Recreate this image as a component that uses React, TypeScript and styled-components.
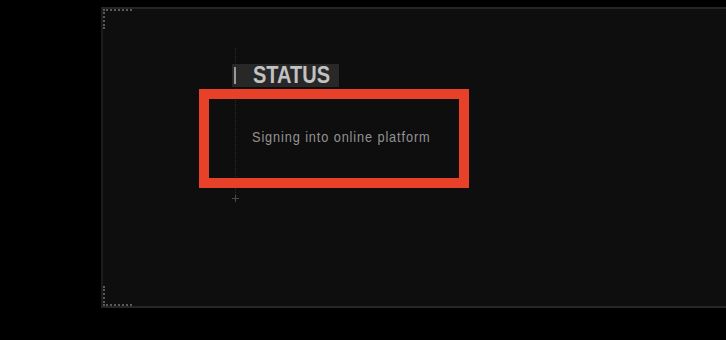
import React from "react";
import styled, { createGlobalStyle } from "styled-components";

const GlobalStyle = createGlobalStyle`
  html, body {
    margin: 0;
    padding: 0;
    background: #000;
    overflow: hidden;
  }
`;

const App: React.FC = () => {
  return (
    <>
      <GlobalStyle />
      <Screen>
        <Panel>
          <Corner $pos="top" />
          <Corner $pos="bottom" />
          <Track>
            <Header>
              <HeaderMark />
              <HeaderText>STATUS</HeaderText>
            </Header>
            <Highlight>
              <Message>Signing into online platform</Message>
            </Highlight>
          </Track>
          <PlusMark width="9" height="9" viewBox="0 0 9 9">
            <path d="M4.5 1v7M1 4.5h7" stroke="#4a4a4a" strokeWidth="1" />
          </PlusMark>
        </Panel>
      </Screen>
    </>
  );
};

export default App;

const Screen = styled.div`
  display: flex;
  width: 726px;
  height: 340px;
  padding: 7px 0 0 101px;
  box-sizing: border-box;
  background: #000;
  overflow: hidden;
`;

const Panel = styled.div`
  position: relative;
  flex: 0 0 700px;
  height: 301px;
  box-sizing: border-box;
  border-top: 2px solid #262626;
  border-bottom: 2px solid #262626;
  border-left: 2px solid #1c1c1c;
  background: #0e0e0e;
  padding: 39px 0 0 132px;
`;

const Corner = styled.div<{ $pos: "top" | "bottom" }>`
  position: absolute;
  left: 0;
  ${({ $pos }) => ($pos === "top" ? "top: 0;" : "bottom: 0;")}
  width: 29px;
  height: 20px;
  box-sizing: border-box;
  border-left: 2px dotted #5a5a5a;
  ${({ $pos }) =>
    $pos === "top"
      ? "border-top: 2px dotted #5a5a5a;"
      : "border-bottom: 2px dotted #5a5a5a;"}
`;

const Track = styled.div`
  display: flex;
  flex-direction: column;
  width: 300px;
  height: 147px;
  box-sizing: border-box;
  border-left: 1px dotted #2a2a2a;
  padding-top: 16px;
`;

const Header = styled.div`
  display: flex;
  align-items: center;
  width: 107px;
  height: 23px;
  margin-left: -4px;
  background: #282828;
  border-radius: 1px;
`;

const HeaderMark = styled.span`
  flex: 0 0 2px;
  height: 17px;
  margin-left: 2px;
  background: #9a9a9a;
`;

const HeaderText = styled.span`
  display: inline-block;
  margin-left: 17px;
  font-family: "Liberation Sans", Arial, sans-serif;
  font-weight: 700;
  font-size: 23px;
  line-height: 23px;
  color: #c2c2c2;
  transform: scaleX(0.87);
  transform-origin: left center;
`;

const Highlight = styled.div`
  width: 270px;
  height: 99px;
  box-sizing: border-box;
  margin: 2px 0 0 -37px;
  border: 10px solid #e8412a;
  padding: 29px 0 0 43px;
`;

const Message = styled.div`
  display: inline-block;
  font-family: "Liberation Sans", Arial, sans-serif;
  font-size: 14.5px;
  line-height: 17px;
  letter-spacing: 1px;
  color: #939393;
  white-space: nowrap;
  transform: scaleX(0.88);
  transform-origin: left center;
`;

const PlusMark = styled.svg`
  display: block;
  margin: -1px 0 0 -4px;
`;
